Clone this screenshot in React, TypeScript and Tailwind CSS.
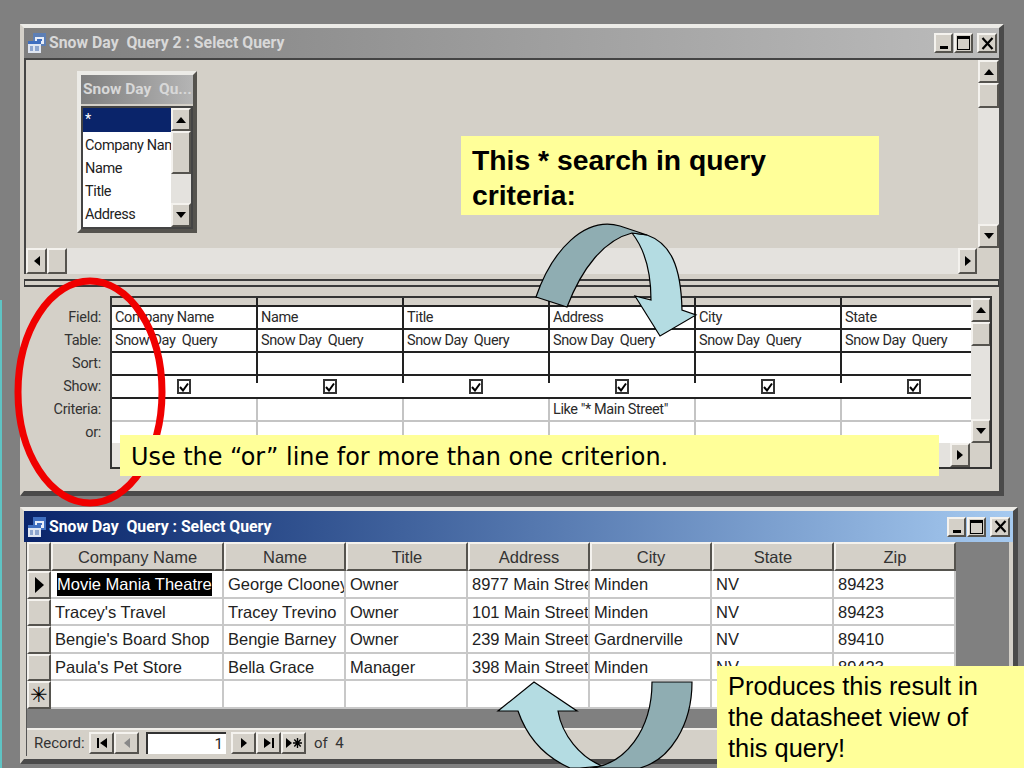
import React from "react";

const bevel = "border-t-2 border-l-2 border-r-2 border-b-2 border-t-[#f4f2ee] border-l-[#f4f2ee] border-r-[#55534e] border-b-[#55534e] bg-[#d4d0c8]";

type Dir = "up" | "down" | "left" | "right";

function Tri({ dir, color = "#000" }: { dir: Dir; color?: string }) {
  const pts = { up: "0,8 10,8 5,2", down: "0,2 10,2 5,8", left: "8,0 8,10 2,5", right: "2,0 2,10 8,5" }[dir];
  return (
    <svg width="10" height="10" viewBox="0 0 10 10">
      <polygon points={pts} fill={color} />
    </svg>
  );
}

function ScrollBtn({ dir, className = "" }: { dir: Dir; className?: string }) {
  return (
    <div className={`flex shrink-0 items-center justify-center ${bevel} ${className}`}>
      <Tri dir={dir} />
    </div>
  );
}

function WindowIcon({ faded }: { faded?: boolean }) {
  return (
    <svg width="20" height="22" viewBox="0 0 20 22" className="shrink-0">
      <rect x="6" y="1" width="13" height="13" fill={faded ? "#5d7fb5" : "#3f6fc0"} />
      <rect x="8" y="5" width="9" height="7" fill="#e8eef8" />
      <rect x="10" y="7" width="5" height="2" fill="#3f6fc0" />
      <rect x="1" y="9" width="13" height="12" fill="#dfe6f2" />
      <rect x="1" y="9" width="13" height="3" fill="#3f6fc0" />
      <rect x="3" y="14" width="3" height="5" fill="#8ea6cf" />
      <rect x="8" y="14" width="4" height="5" fill="#8ea6cf" />
    </svg>
  );
}

function WinButtons({ gap }: { gap: string }) {
  return (
    <div className={`flex items-center ${gap}`}>
      <div className="flex gap-px">
        <div className={`flex h-[20px] w-[19px] items-end justify-center pb-[2px] ${bevel}`}>
          <div className="h-[3px] w-[8px] bg-black" />
        </div>
        <div className={`flex h-[20px] w-[19px] items-center justify-center ${bevel}`}>
          <div className="h-[14px] w-[13px] border border-t-[3px] border-black" />
        </div>
      </div>
      <div className={`flex h-[20px] w-[20px] items-center justify-center ${bevel}`}>
        <svg width="13" height="13" viewBox="0 0 13 13">
          <path d="M1.5 1 L11.5 12 M11.5 1 L1.5 12" stroke="#000" strokeWidth="2.2" />
        </svg>
      </div>
    </div>
  );
}

function Check() {
  return (
    <div className="flex h-[15px] w-[14px] items-center justify-center border-2 border-[#333] bg-white">
      <svg width="10" height="10" viewBox="0 0 10 10">
        <path d="M1 5 L4 8.5 L9 1.5" fill="none" stroke="#000" strokeWidth="2" />
      </svg>
    </div>
  );
}

const designCols = ["Company Name", "Name", "Title", "Address", "City", "State"];
const labels = ["Field:", "Table:", "Sort:", "Show:", "Criteria:", "or:"];

function DesignGrid() {
  const rowCls = "flex h-[23px]";
  const cell = "w-[146px] shrink-0 overflow-hidden whitespace-nowrap pl-[3px] text-[14.5px] leading-[22px] tracking-[-0.4px] text-[#2a2a2a]";
  return (
    <div className="w-[859px] shrink-0 overflow-hidden">
      <div className="flex h-[9px] border-b-2 border-[#222] bg-[#d4d0c8]">
        {designCols.map(c => (
          <div key={c} className="w-[146px] shrink-0 border-r-2 border-[#222]" />
        ))}
      </div>
      <div className={`${rowCls} border-b-2 border-[#222]`}>
        {designCols.map(c => (
          <div key={c} className={`${cell} border-r-2 border-[#222]`}>{c}</div>
        ))}
      </div>
      <div className={`${rowCls} border-b-2 border-[#222]`}>
        {designCols.map(c => (
          <div key={c} className={`${cell} border-r-2 border-[#222]`}>Snow Day&nbsp; Query</div>
        ))}
      </div>
      <div className={`${rowCls} border-b-2 border-[#222]`}>
        {designCols.map(c => (
          <div key={c} className={`${cell} border-r-2 border-[#222]`} />
        ))}
      </div>
      <div className={`${rowCls} border-b-2 border-[#222]`}>
        {designCols.map(c => (
          <div key={c} className="relative flex w-[146px] shrink-0 items-center justify-center pr-[2px]">
            <Check />
            <div className="absolute right-0 top-0 h-[7px] w-[2px] bg-[#222]" />
          </div>
        ))}
      </div>
      <div className={`${rowCls} border-b-2 border-[#c4c4c4]`}>
        {designCols.map(c => (
          <div key={c} className={`${cell} border-r-2 border-[#c4c4c4]`}>
            {c === "Address" ? 'Like "* Main Street"' : ""}
          </div>
        ))}
      </div>
      <div className={rowCls}>
        {designCols.map(c => (
          <div key={c} className={`${cell} border-r-2 border-[#c4c4c4]`} />
        ))}
      </div>
    </div>
  );
}

const sheetCols = [
  { name: "Company Name", w: "w-[173px]" },
  { name: "Name", w: "w-[122px]" },
  { name: "Title", w: "w-[122px]" },
  { name: "Address", w: "w-[122px]" },
  { name: "City", w: "w-[122px]" },
  { name: "State", w: "w-[122px]" },
  { name: "Zip", w: "w-[122px]" },
];

const sheetRows = [
  ["Movie Mania Theatre", "George Clooney", "Owner", "8977 Main Street", "Minden", "NV", "89423"],
  ["Tracey's Travel", "Tracey Trevino", "Owner", "101 Main Street", "Minden", "NV", "89423"],
  ["Bengie's Board Shop", "Bengie Barney", "Owner", "239 Main Street", "Gardnerville", "NV", "89410"],
  ["Paula's Pet Store", "Bella Grace", "Manager", "398 Main Street", "Minden", "NV", "89423"],
  ["", "", "", "", "", "", ""],
];

function Datasheet() {
  return (
    <div className="flex-1 bg-[#808080]" style={{ fontFamily: "'Liberation Sans', sans-serif" }}>
      <div className="flex h-[29px] w-[930px]">
        <div className={`h-[29px] w-[24px] shrink-0 ${bevel} border-b-[#222]`} />
        {sheetCols.map(c => (
          <div
            key={c.name}
            className={`${c.w} shrink-0 text-center text-[16.5px] leading-[26px] text-[#333] ${bevel} border-b-[#222]`}
          >
            {c.name}
          </div>
        ))}
      </div>
      {sheetRows.map((r, i) => (
        <div key={i} className="flex h-[27.5px] w-[930px]">
          <div className={`flex w-[24px] shrink-0 items-center justify-center ${bevel} border-r-[#333]`}>
            {i === 0 && (
              <svg width="12" height="16" viewBox="0 0 12 16">
                <polygon points="2,0 2,16 11,8" fill="#000" />
              </svg>
            )}
            {i === 4 && <span className="text-[21px] leading-[22px] text-black">✳</span>}
          </div>
          {r.map((v, j) => (
            <div
              key={j}
              className={`${sheetCols[j].w} shrink-0 overflow-hidden whitespace-nowrap border-r-2 border-b-2 border-[#c8c8c8] bg-white pl-[4px] text-[16.5px] leading-[27px] text-[#222]`}
            >
              {i === 0 && j === 0 ? (
                <span className="ml-[2px] inline-block bg-black leading-[23px] text-white">{v}</span>
              ) : (
                v
              )}
            </div>
          ))}
        </div>
      ))}
    </div>
  );
}

function NavBtn({ children, dim }: { children: React.ReactNode; dim?: boolean }) {
  return (
    <div className={`flex h-[22px] w-[25px] items-center justify-center ${bevel} ${dim ? "text-[#888]" : "text-black"}`}>
      {children}
    </div>
  );
}

export default function App() {
  return (
    <div
      className="relative h-[768px] w-[1024px] overflow-hidden bg-[#808080] pl-5 pt-6"
      style={{ fontFamily: "Roboto, 'Liberation Sans', sans-serif" }}
    >
      {/* Query design window */}
      <div className="flex h-[472px] w-[984px] flex-col border-t-[4px] border-l-[4px] border-r-[5px] border-b-[5px] border-t-[#ecebe7] border-l-[#d4d0c8] border-r-[#4a4a4a] border-b-[#4a4a4a] bg-[#d4d0c8]">
        <div className="flex h-[30px] shrink-0 items-center justify-between bg-gradient-to-r from-[#7f7f7f] to-[#bcbcbc] pl-[3px] pr-[2px]">
          <div className="flex items-center gap-[2px]">
            <WindowIcon faded />
            <span className="text-[15.8px] font-bold whitespace-pre text-[#d8d8d8]">Snow Day  Query 2 : Select Query</span>
          </div>
          <WinButtons gap="gap-[4px]" />
        </div>

        {/* top pane with the field list */}
        <div className="flex h-[216px] shrink-0 flex-col border-t-2 border-l-2 border-[#444]">
          <div className="flex flex-1">
            <div className="flex-1 pl-[51px] pt-[11px]">
              <div className="flex h-[162px] w-[120px] flex-col border-4 border-t-[#ecebe7] border-l-[#ecebe7] border-r-[#55534e] border-b-[#55534e] bg-[#d4d0c8]">
                <div className="flex h-[29px] shrink-0 items-center overflow-hidden whitespace-pre bg-gradient-to-r from-[#7f7f7f] to-[#b5b5b5] pl-[2px] text-[15.5px] font-bold text-[#d8d8d8]">
                  Snow Day  Qu...
                </div>
                <div className="mt-[2px] flex flex-1 border-2 border-[#444]">
                  <div className="flex-1 overflow-hidden whitespace-nowrap bg-white text-[14.5px] leading-[23px] tracking-[-0.4px] text-[#222]">
                    <div className="h-[24px] bg-[#0a246a] pl-[2px] text-white">*</div>
                    <div className="mt-[2px] pl-[2px]">Company Name</div>
                    <div className="pl-[2px]">Name</div>
                    <div className="pl-[2px]">Title</div>
                    <div className="pl-[2px]">Address</div>
                  </div>
                  <div className="flex w-[20px] shrink-0 flex-col bg-[#e4e2de]">
                    <ScrollBtn dir="up" className="h-[23px]" />
                    <div className={`h-[43px] shrink-0 ${bevel}`} />
                    <div className="flex-1" />
                    <ScrollBtn dir="down" className="h-[24px]" />
                  </div>
                </div>
              </div>
            </div>
            <div className="flex w-[21px] shrink-0 flex-col bg-[#e4e2de]">
              <ScrollBtn dir="up" className="h-[23px]" />
              <div className={`h-[25px] shrink-0 ${bevel}`} />
              <div className="flex-1" />
              <ScrollBtn dir="down" className="h-[24px]" />
            </div>
          </div>
          <div className="flex h-[26px] shrink-0 items-stretch">
            <ScrollBtn dir="left" className="w-[21px]" />
            <div className={`w-[20px] shrink-0 ${bevel}`} />
            <div className="flex-1 bg-[#e4e2de]" />
            <ScrollBtn dir="right" className="w-[19px]" />
            <div className="w-[22px] shrink-0 bg-[#d4d0c8]" />
          </div>
        </div>

        {/* splitter */}
        <div className="mt-[5px] h-[8px] w-[975px] shrink-0 border-y-2 border-l border-r border-[#3a3a3a] bg-[#d4d0c8]" />

        {/* bottom pane with the design grid */}
        <div className="flex flex-1">
          <div className="w-[86px] shrink-0 pr-[9px] pt-[18.5px] text-right text-[14.5px] leading-[23px] tracking-[-0.3px] text-[#333]">
            {labels.map(l => (
              <div key={l}>{l}</div>
            ))}
          </div>
          <div className="mt-[9px] flex h-[173px] w-[882px] shrink-0 flex-col border-2 border-[#333] bg-white">
            <div className="flex flex-1 overflow-hidden">
              <DesignGrid />
              <div className="flex w-[20px] shrink-0 flex-col bg-[#e4e2de]">
                <ScrollBtn dir="up" className="h-[24px]" />
                <div className={`h-[24px] shrink-0 ${bevel}`} />
                <div className="flex-1" />
                <ScrollBtn dir="down" className="h-[24px]" />
              </div>
            </div>
            <div className="flex h-[24px] shrink-0">
              <div className="flex-1 bg-[#e4e2de]" />
              <ScrollBtn dir="right" className="w-[20px]" />
              <div className="w-[20px] shrink-0 bg-[#d4d0c8]" />
            </div>
          </div>
        </div>
      </div>

      {/* Datasheet window */}
      <div className="mt-[11px] flex h-[257px] w-[998px] flex-col border-t-[4px] border-l-[4px] border-r-[5px] border-b-[5px] border-t-[#ecebe7] border-l-[#d4d0c8] border-r-[#4a4a4a] border-b-[#4a4a4a] bg-[#d4d0c8]">
        <div className="flex h-[31px] shrink-0 items-center justify-between bg-gradient-to-r from-[#0a246a] to-[#a6caf0] pl-[3px] pr-[3px]">
          <div className="flex items-center gap-[2px]">
            <WindowIcon />
            <span className="text-[15.8px] font-bold whitespace-pre text-white">Snow Day  Query : Select Query</span>
          </div>
          <WinButtons gap="gap-[4px]" />
        </div>
        <div className="mb-[3px] ml-[2px] mr-[4px] flex flex-1 flex-col border-l border-[#555]">
          <Datasheet />
          <div className="flex h-[28px] shrink-0 items-center border-t-2 border-[#f0eeea] pl-[7px] text-[15px] text-[#333]">
            <span className="w-[55px]">Record:</span>
            <NavBtn>
              <svg width="12" height="10" viewBox="0 0 12 10"><path d="M1 0h2v10H1zM11 0v10L4 5z" fill="currentColor" /></svg>
            </NavBtn>
            <NavBtn dim>
              <Tri dir="left" color="#888" />
            </NavBtn>
            <div className="ml-[7px] h-[22px] w-[80px] border-t-2 border-l-2 border-[#333] bg-white pr-[3px] text-right text-[15px] leading-[20px] text-[#222]">1</div>
            <div className="ml-[5px] flex">
              <NavBtn>
                <Tri dir="right" />
              </NavBtn>
              <NavBtn>
                <svg width="12" height="10" viewBox="0 0 12 10"><path d="M1 0v10l7-5zM9 0h2v10H9z" fill="currentColor" /></svg>
              </NavBtn>
              <NavBtn>
                <svg width="18" height="10" viewBox="0 0 18 10"><path d="M1 0v10l6-5z" fill="currentColor" /><path d="M12.5 0v10M8 5h9M9.3 1.5l6.4 7M15.7 1.5l-6.4 7" stroke="currentColor" strokeWidth="1.4" /></svg>
              </NavBtn>
            </div>
            <span className="ml-[8px] whitespace-pre">of  4</span>
          </div>
        </div>
      </div>

      {/* slide annotations over the screenshots */}
      <div className="absolute left-0 top-[300px] h-[468px] w-[2px] bg-[#5fc4c4]" />
      <svg className="absolute left-0 top-0" width="1024" height="768" viewBox="0 0 1024 768">
        <ellipse cx="90" cy="392" rx="72" ry="111" fill="none" stroke="#f00000" strokeWidth="7" />
      </svg>
      <div className="absolute left-[461px] top-[136px] h-[79px] w-[418px] bg-[#ffff99] pl-[11px] pt-[7px] text-[28.3px] font-bold leading-[35px] text-black" style={{ fontFamily: "'Liberation Sans', sans-serif" }}>
        This * search in query
        <br />
        criteria:
      </div>
      <div className="absolute left-[120px] top-[435px] h-[41px] w-[819px] bg-[#ffff99] pl-[11px] text-[23.9px] leading-[45px] text-black" style={{ fontFamily: "'DejaVu Sans', sans-serif" }}>
        Use the “or” line for more than one criterion.
      </div>
      <div className="absolute left-[717px] top-[666px] h-[102px] w-[307px] bg-[#ffff99] pl-[11px] pt-[5px] text-[25.4px] leading-[31px] text-black" style={{ fontFamily: "'Liberation Sans', sans-serif" }}>
        Produces this result in
        <br />
        the datasheet view of
        <br />
        this query!
      </div>
      <svg className="absolute left-0 top-0" width="1024" height="768" viewBox="0 0 1024 768">
        {/* top arrow */}
        <path
          d="M632 233 L647 235 C670 243 681 265 682 310 L696 315 L660 336 L635 296 L651 300 C651 270 643 247 632 233 Z"
          fill="#b4dce2"
          stroke="#000"
          strokeWidth="1.2"
        />
        <path
          d="M536 297 L567 307 C582 268 604 240 632 233 L647 235 L620 226 C585 216 552 250 536 297 Z"
          fill="#8fadb2"
          stroke="#000"
          strokeWidth="1.2"
        />
        {/* bottom arrow */}
        <path
          d="M534 682 L577 711 L558 711 C562 735 580 757 602 766 L580 768 L570 768 C545 757 527 737 518 711 L498 711 Z"
          fill="#b4dce2"
          stroke="#000"
          strokeWidth="1.2"
        />
        <path
          d="M652 682 L692 682 C692 725 670 760 640 768 L590 768 C625 765 652 730 652 682 Z"
          fill="#8fadb2"
          stroke="#000"
          strokeWidth="1.2"
        />
      </svg>
    </div>
  );
}
